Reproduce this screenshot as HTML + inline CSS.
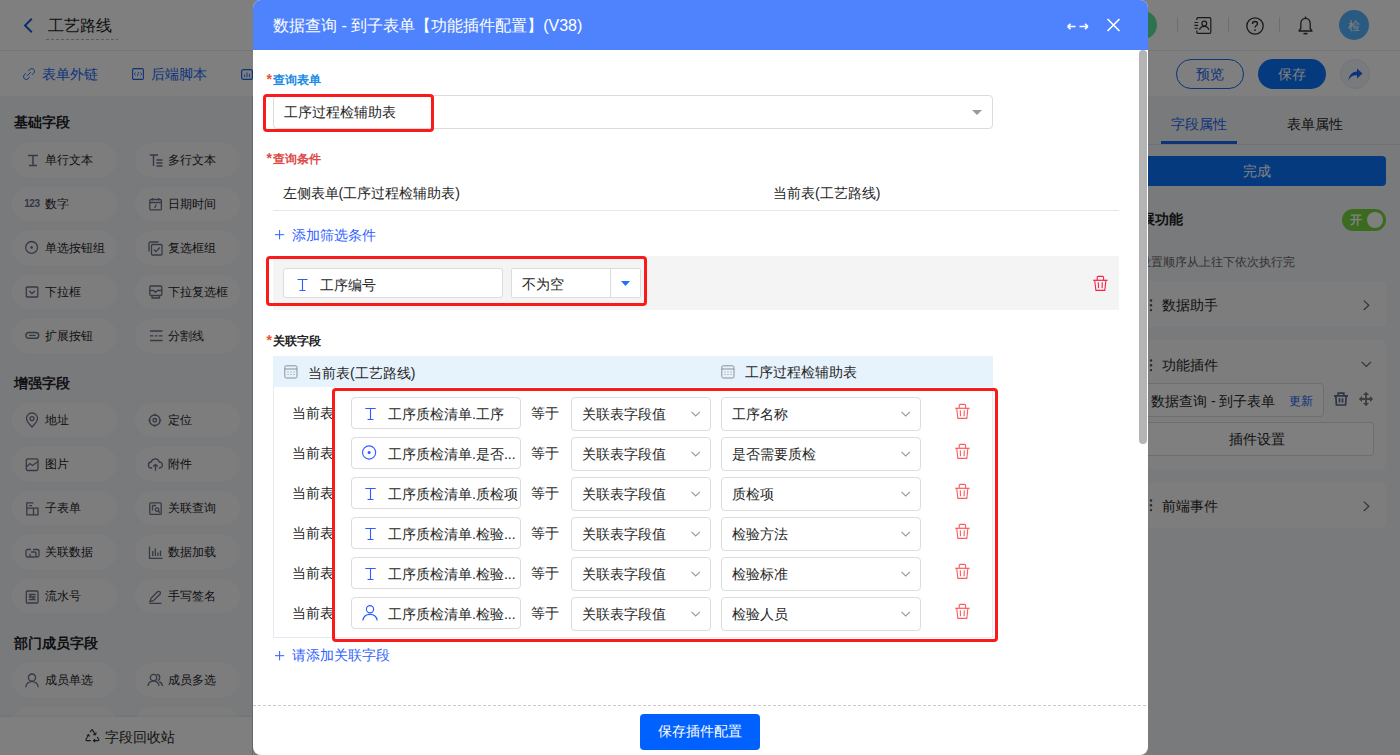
<!DOCTYPE html>
<html><head><meta charset="utf-8">
<style>
*{box-sizing:border-box;margin:0;padding:0}
html,body{width:1400px;height:755px;overflow:hidden;background:#fff;font-family:"Liberation Sans",sans-serif;color:#262626}
.a{position:absolute}
.t{position:absolute;white-space:nowrap;line-height:20px}
svg{position:absolute;overflow:visible;z-index:1}
/* page */
#topbar{left:0;top:0;width:1400px;height:51px;background:#fff;border-bottom:1px solid #ececec}
#toolbar{left:0;top:51px;width:1400px;height:45px;background:#fff}
#leftp{left:0;top:96px;width:253px;height:659px;background:#f3f4f7;border-right:1px solid #d2d5dc}
.sec{font-size:14px;font-weight:bold;color:#1f2329}
.pill{position:absolute;width:105px;height:34px;border-radius:17px;background:#fafbfc}
.pill span{position:absolute;left:33px;top:7px;font-size:12px;line-height:20px;color:#1f2329;white-space:nowrap}
.pill svg{left:14px;top:10px}
#recycle{left:0;top:717px;width:252px;height:38px;background:#fff;box-shadow:0 -1px 3px rgba(0,0,0,.06)}
#rightp{left:1148px;top:96px;width:252px;height:659px;background:#f3f4f7}
.card{position:absolute;left:-20px;width:258px;background:#fbfbfc;border-radius:6px}
#overlay{z-index:5;left:0;top:0;width:1400px;height:755px;background:rgba(0,0,0,.5)}
/* modal */
#modal{z-index:6;left:253px;top:0;width:895px;height:755px;background:#fff;border-radius:8px;overflow:hidden}
#mhead{left:0;top:0;width:895px;height:50px;background:#4f83fd}
.lbl{font-size:12px;font-weight:bold;line-height:16px}
.ast{position:absolute;font-size:14px;line-height:16px;font-weight:bold}
.inp{position:absolute;background:#fff;border:1px solid #dcdcdc;border-radius:4px}
.redbox{position:absolute;border:3px solid #fb1a1a;border-radius:4px}
.f14{font-size:14px}
</style></head><body>
<!-- ================= PAGE ================= -->
<div id="topbar" class="a">
  <svg style="left:23px;top:18px" width="10" height="15" viewBox="0 0 10 15"><path d="M8.8 0.8L2 7.5L8.8 14.2" stroke="#1556d6" stroke-width="1.9" fill="none"/></svg>
  <div class="t" style="left:48px;top:16px;font-size:16px;color:#1f2329">工艺路线</div>
  <div class="a" style="left:46px;top:39px;width:72px;height:1px;background-image:linear-gradient(90deg,#bbb 0 3px,transparent 3px 5px);background-size:5px 1px"></div>
  <div class="a" style="left:1129px;top:11px;width:28px;height:28px;border-radius:50%;background:#5ae6a0"></div>
  <div class="a" style="left:1177px;top:17px;width:1px;height:15px;background:#ddd"></div>
  <div class="a" style="left:1228px;top:17px;width:1px;height:15px;background:#ddd"></div>
  <div class="a" style="left:1279px;top:17px;width:1px;height:15px;background:#ddd"></div>
  <svg style="left:1194px;top:17px" width="18" height="17" viewBox="0 0 18 17"><path d="M2.8 3V1.8C2.8 1.1 3.3 0.6 4 0.6H15.6C16.3 0.6 16.8 1.1 16.8 1.8V15.2C16.8 15.9 16.3 16.4 15.6 16.4H4C3.3 16.4 2.8 15.9 2.8 15.2V13.5" stroke="#333" stroke-width="1.2" fill="none"/><circle cx="10.3" cy="6.6" r="2.4" stroke="#333" stroke-width="1.2" fill="none"/><path d="M5.6 12.8C6 10.5 7.9 9.4 10.3 9.4S14.3 10.5 14.8 12.8" stroke="#333" stroke-width="1.2" fill="none"/><path d="M0.4 5.5H4.2M0.4 8.4H4.2M0.4 11.3H4.2" stroke="#333" stroke-width="1.1"/></svg>
  <svg style="left:1246px;top:17px" width="18" height="18" viewBox="0 0 18 18"><circle cx="9" cy="9" r="8.2" stroke="#333" stroke-width="1.3" fill="none"/><path d="M6.5 7C6.5 5.4 7.6 4.5 9 4.5S11.5 5.4 11.5 6.9C11.5 8.4 9 8.7 9 10.6" stroke="#333" stroke-width="1.4" fill="none"/><circle cx="9" cy="13.2" r="0.9" fill="#333"/></svg>
  <svg style="left:1298px;top:16px" width="15" height="19" viewBox="0 0 15 19"><path d="M7.5 2.3C4.5 2.3 2.8 4.6 2.8 7.5V12.5L1 15H14L12.2 12.5V7.5C12.2 4.6 10.5 2.3 7.5 2.3Z" stroke="#333" stroke-width="1.3" fill="none" stroke-linejoin="round"/><path d="M7.5 0.5V2.3" stroke="#333" stroke-width="1.3"/><path d="M5.5 17.6H9.5" stroke="#333" stroke-width="1.6"/></svg>
  <div class="a" style="left:1339px;top:10px;width:30px;height:30px;border-radius:50%;background:#54b4ff"></div>
  <div class="t" style="left:1339px;top:16px;width:30px;text-align:center;font-size:12px;color:#fff">检</div>
</div>
<div id="toolbar" class="a">
  <svg style="left:23px;top:17px" width="12" height="12" viewBox="0 0 12 12"><path d="M5.2 3L6.8 1.4C7.9 0.3 9.7 0.3 10.7 1.4S11.7 4 10.7 5.1L8.9 6.9M6.8 9L5.2 10.6C4.1 11.7 2.3 11.7 1.3 10.6S0.3 8 1.3 6.9L3.1 5.1M4.2 7.8L7.8 4.2" stroke="#1a66f5" stroke-width="1" fill="none"/></svg>
  <div class="t" style="left:42px;top:13px;font-size:14px;color:#1a66f5">表单外链</div>
  <svg style="left:132px;top:17px" width="12" height="12" viewBox="0 0 12 12"><rect x="0.6" y="0.6" width="10.8" height="10.8" rx="1.2" stroke="#1a66f5" stroke-width="1.1" fill="none"/><path d="M3.6 4.4L2.2 6L3.6 7.6M8.4 4.4L9.8 6L8.4 7.6M6.6 4L5.4 8" stroke="#1a66f5" stroke-width="0.8" fill="none"/></svg>
  <div class="t" style="left:151px;top:13px;font-size:14px;color:#1a66f5">后端脚本</div>
  <svg style="left:241px;top:18px" width="12" height="11" viewBox="0 0 12 11"><rect x="0.6" y="0.6" width="10.8" height="9.8" rx="2" stroke="#1a66f5" stroke-width="1.2" fill="none"/><path d="M3.6 5.5V8.2M6 3.5V8.2M8.4 4.8V8.2" stroke="#1a66f5" stroke-width="0.9" fill="none"/></svg>
  <div class="a" style="left:1176px;top:8px;width:68px;height:30px;border-radius:15px;border:1.3px solid #1a66f5;background:#fff"></div>
  <div class="t" style="left:1176px;top:13px;width:68px;text-align:center;font-size:14px;color:#1a66f5">预览</div>
  <div class="a" style="left:1258px;top:8px;width:68px;height:30px;border-radius:15px;background:#0a74ff"></div>
  <div class="t" style="left:1258px;top:13px;width:68px;text-align:center;font-size:14px;color:#fff">保存</div>
  <div class="a" style="left:1340px;top:8px;width:30px;height:30px;border-radius:50%;background:#f2f5fc;border:1px solid #e3e8f5"></div>
  <svg style="left:1348px;top:17px" width="15" height="13" viewBox="0 0 15 13"><path d="M9 0.5L14.5 5.5L9 10.5V7.3C5 7.3 2.5 8.5 0.5 12.5C1 7.5 3.5 3.8 9 3.5Z" fill="#1a66f5"/></svg>
</div>
<div id="leftp" class="a"><div class="t sec" style="left:14px;top:16px">基础字段</div>
<div class="pill" style="left:12px;top:47px"><span>单行文本</span><svg style="left:13px;top:10px" width="15" height="15" viewBox="0 0 15 15" fill="none" stroke="#6c7389" stroke-width="1.3"><path d="M3 2.6H13M4 12.6H12M8 2.6V12.6" stroke-width="1.5"/></svg></div>
<div class="pill" style="left:135px;top:47px"><span>多行文本</span><svg style="left:13px;top:10px" width="15" height="15" viewBox="0 0 15 15" fill="none" stroke="#6c7389" stroke-width="1.3"><path d="M1.8 2H10M5.5 2V13M8.5 7H14.5M8.5 10H14.5M8.5 13H14.5" stroke-width="1.4"/></svg></div>
<div class="pill" style="left:12px;top:91px"><span>数字</span><b style="position:absolute;left:12.3px;top:11px;font-family:'Liberation Sans';font-size:10px;line-height:12px;color:#687089;letter-spacing:-0.5px">123</b></div>
<div class="pill" style="left:135px;top:91px"><span>日期时间</span><svg style="left:13px;top:10px" width="15" height="15" viewBox="0 0 15 15" fill="none" stroke="#6c7389" stroke-width="1.3"><rect x="1.8" y="2.5" width="11.6" height="10.4" rx="1.2"/><path d="M1.8 5.5H13.4M4.5 1V3.5M10.7 1V3.5M8.3 7.5L6.7 11"/></svg></div>
<div class="pill" style="left:12px;top:135px"><span>单选按钮组</span><svg style="left:13px;top:10px" width="15" height="15" viewBox="0 0 15 15" fill="none" stroke="#6c7389" stroke-width="1.3"><circle cx="6.6" cy="6.4" r="5.9"/><circle cx="6.6" cy="6.4" r="1.3" fill="#6c7389" stroke="none"/></svg></div>
<div class="pill" style="left:135px;top:135px"><span>复选框组</span><svg style="left:13px;top:10px" width="15" height="15" viewBox="0 0 15 15" fill="none" stroke="#6c7389" stroke-width="1.3"><path d="M1 10.5V2.5C1 1.6 1.6 1 2.5 1H10.5"/><rect x="3.5" y="3.5" width="10.5" height="10.5" rx="1"/><path d="M5.8 8.5L8 10.6L11.8 6.5"/></svg></div>
<div class="pill" style="left:12px;top:179px"><span>下拉框</span><svg style="left:13px;top:10px" width="15" height="15" viewBox="0 0 15 15" fill="none" stroke="#6c7389" stroke-width="1.3"><rect x="1.3" y="2" width="11.5" height="10" rx="0.8"/><path d="M4.3 6L7 8.6L9.8 6"/></svg></div>
<div class="pill" style="left:135px;top:179px"><span>下拉复选框</span><svg style="left:13px;top:10px" width="15" height="15" viewBox="0 0 15 15" fill="none" stroke="#6c7389" stroke-width="1.3"><rect x="1.8" y="1" width="12" height="9.5" rx="1.2"/><path d="M1.8 5.5H5.5L7.5 7.3L9.5 5.5H13.8"/><path d="M4 10.5V13H11.5V10.5"/></svg></div>
<div class="pill" style="left:12px;top:223px"><span>扩展按钮</span><svg style="left:13px;top:10px" width="15" height="15" viewBox="0 0 15 15" fill="none" stroke="#6c7389" stroke-width="1.3"><rect x="0.9" y="3.5" width="12.8" height="5.8" rx="2.9" stroke-width="1.4"/><path d="M4 6.4H10.6"/></svg></div>
<div class="pill" style="left:135px;top:223px"><span>分割线</span><svg style="left:13px;top:10px" width="15" height="15" viewBox="0 0 15 15" fill="none" stroke="#6c7389" stroke-width="1.3"><path d="M2 2H14.5M2 11.5H14.5M2 6.8H5.5M7 6.8H9.5M11 6.8H14.5"/></svg></div>
<div class="t sec" style="left:14px;top:277px">增强字段</div>
<div class="pill" style="left:12px;top:307px"><span>地址</span><svg style="left:13px;top:10px" width="15" height="15" viewBox="0 0 15 15" fill="none" stroke="#6c7389" stroke-width="1.3"><path d="M7 14C3.5 10.5 1.5 7.8 1.5 5.5A5.5 5.5 0 0 1 12.5 5.5C12.5 7.8 10.5 10.5 7 14Z"/><circle cx="7" cy="5.6" r="2"/></svg></div>
<div class="pill" style="left:135px;top:307px"><span>定位</span><svg style="left:13px;top:10px" width="15" height="15" viewBox="0 0 15 15" fill="none" stroke="#6c7389" stroke-width="1.3"><circle cx="6.8" cy="7.3" r="5.3"/><circle cx="6.8" cy="7.3" r="1.8"/><path d="M6.8 0.8V3M6.8 11.6V13.8M0.4 7.3H2.5M11.1 7.3H13.2"/></svg></div>
<div class="pill" style="left:12px;top:351px"><span>图片</span><svg style="left:13px;top:10px" width="15" height="15" viewBox="0 0 15 15" fill="none" stroke="#6c7389" stroke-width="1.3"><rect x="1.3" y="1.8" width="11.7" height="11.7" rx="1.5"/><path d="M1.3 10L5 6.5L7.5 8.5L13 4.5"/></svg></div>
<div class="pill" style="left:135px;top:351px"><span>附件</span><svg style="left:13px;top:10px" width="15" height="15" viewBox="0 0 15 15" fill="none" stroke="#6c7389" stroke-width="1.3"><path d="M4.2 11H3.6A3 3 0 0 1 3.2 5A4.2 4.2 0 0 1 11.3 5A3 3 0 0 1 11.5 11H10.8M7.5 13.8V7.5M5.3 9.5L7.5 7.3L9.7 9.5"/></svg></div>
<div class="pill" style="left:12px;top:395px"><span>子表单</span><svg style="left:13px;top:10px" width="15" height="15" viewBox="0 0 15 15" fill="none" stroke="#6c7389" stroke-width="1.3"><path d="M8.5 1.9H1.8V13.8H8.5M1.8 7.2H8.5V13.8M8.5 7.2H13V13.8H8.5M4.3 4.6H7"/></svg></div>
<div class="pill" style="left:135px;top:395px"><span>关联查询</span><svg style="left:13px;top:10px" width="15" height="15" viewBox="0 0 15 15" fill="none" stroke="#6c7389" stroke-width="1.3"><rect x="1.8" y="1.8" width="11.4" height="11.6" rx="1"/><path d="M4.5 4.5H8M4.5 4.5V9.5"/><circle cx="9" cy="8.6" r="1.8"/><path d="M10.3 10L12 11.7"/></svg></div>
<div class="pill" style="left:12px;top:439px"><span>关联数据</span><svg style="left:13px;top:10px" width="15" height="15" viewBox="0 0 15 15" fill="none" stroke="#6c7389" stroke-width="1.3"><path d="M5.8 4.5H2.5C1.6 4.5 1 5.1 1 6V10.5C1 11.4 1.6 12 2.5 12H5M6 7H9.5C10.4 7 11 7.6 11 8.5V10.5C11 11.4 10.4 12 9.5 12H6.5C5.6 12 5 11.4 5 10.5V8.8M8 4.5H12.5C13.4 4.5 14 5.1 14 6V10.5C14 11.4 13.4 12 12.5 12H11"/></svg></div>
<div class="pill" style="left:135px;top:439px"><span>数据加载</span><svg style="left:13px;top:10px" width="15" height="15" viewBox="0 0 15 15" fill="none" stroke="#6c7389" stroke-width="1.3"><path d="M1.5 1.5V13.3H14.5M4.7 6V11M7.3 3.5V11M9.9 7.5V11M12.5 5.5V11"/></svg></div>
<div class="pill" style="left:12px;top:483px"><span>流水号</span><svg style="left:13px;top:10px" width="15" height="15" viewBox="0 0 15 15" fill="none" stroke="#6c7389" stroke-width="1.3"><rect x="1.3" y="2" width="11.7" height="12" rx="1"/><path d="M3.8 5.5H10.5M3.8 8H10.5M3.8 10.5H10.5M6 5.5L5 8M8.8 8L7.8 10.5"/></svg></div>
<div class="pill" style="left:135px;top:483px"><span>手写签名</span><svg style="left:13px;top:10px" width="15" height="15" viewBox="0 0 15 15" fill="none" stroke="#6c7389" stroke-width="1.3"><path d="M2 12.5L3 9.3L9.5 2.8C10.2 2.1 11.2 2.1 11.9 2.8C12.6 3.5 12.6 4.5 11.9 5.2L5.4 11.7L2 12.5ZM1.5 14.3H13.5"/></svg></div>
<div class="t sec" style="left:14px;top:537px">部门成员字段</div>
<div class="pill" style="left:12px;top:567px"><span>成员单选</span><svg style="left:13px;top:10px" width="15" height="15" viewBox="0 0 15 15" fill="none" stroke="#6c7389" stroke-width="1.3"><circle cx="7" cy="4.6" r="3.6"/><path d="M0.8 14.2C1.2 10.7 3.8 8.6 7 8.6S12.8 10.7 13.2 14.2"/></svg></div>
<div class="pill" style="left:135px;top:567px"><span>成员多选</span><svg style="left:13px;top:10px" width="15" height="15" viewBox="0 0 15 15" fill="none" stroke="#6c7389" stroke-width="1.3"><circle cx="5.5" cy="4.6" r="3.2"/><path d="M0 13C0.4 9.9 2.6 8.1 5.5 8.1S10.6 9.9 11 13M8.8 1.4C10.5 1.4 11.8 2.8 11.8 4.6C11.8 6 11 7.2 9.8 7.7M11.2 8.6C13 9.3 14.2 11 14.5 13"/></svg></div>
<div class="pill" style="left:12px;top:611px"><span></span></div>
<div class="pill" style="left:135px;top:611px"><span></span></div>
<div id="recycle" class="a" style="top:621px">
  <svg style="left:85px;top:11.5px" width="15" height="14" viewBox="0 0 15 14" fill="none" stroke="#333" stroke-width="1.1"><path d="M5 3.2L6.6 0.9Q7 0.4 7.4 0.9L10.3 5.6"/><path d="M8.3 5.6H10.5L11.2 3.4"/><path d="M12.3 8L13.8 10.6Q14 11.5 13 11.6H8.6"/><path d="M10.1 10.1L8.5 11.6L10.1 13.1"/><path d="M5.8 11.6H1.6Q0.6 11.5 0.9 10.6L3.6 5.8"/><path d="M1.8 6.4L3.7 5.6L4.5 7.5"/></svg>
  <div class="t" style="left:105px;top:9.5px;font-size:14px;color:#262626">字段回收站</div>
</div></div>
<div id="rightp" class="a">
  <div class="a" style="left:0;top:48px;width:252px;height:1px;background:#e2e4ea"></div>
  <div class="t" style="left:23px;top:18px;font-size:14px;color:#1a66f5">字段属性</div>
  <div class="a" style="left:13px;top:45px;width:76px;height:3px;background:#1a66f5"></div>
  <div class="t" style="left:139px;top:18px;font-size:14px;color:#262626">表单属性</div>
  <div class="a" style="left:-20px;top:60px;width:258px;height:30px;border-radius:4px;background:#0a74ff"></div>
  <div class="t" style="left:-20px;top:65px;width:258px;text-align:center;font-size:14px;color:#fff">完成</div>
  <div class="t" style="left:-21px;top:113px;font-size:14px;font-weight:bold;color:#1f2329">扩展功能</div>
  <div class="a" style="left:194px;top:113px;width:44px;height:22px;border-radius:11px;background:#76d63e"></div>
  <div class="t" style="left:202px;top:114px;font-size:12px;font-weight:bold;color:#fff">开</div>
  <div class="a" style="left:219px;top:116px;width:16px;height:16px;border-radius:50%;background:#fff"></div>
  <div class="t" style="left:-21px;top:156px;font-size:12px;color:#666">按设置顺序从上往下依次执行完</div>
  <div class="card" style="top:185px;height:46px"></div>
  <div class="card" style="top:244px;height:130px"></div>
  <div class="card" style="top:386px;height:46px"></div>

  <svg style="left:0.8px;top:203px" width="4" height="13" viewBox="0 0 4 13" fill="#555"><circle cx="2" cy="1.5" r="1.2"/><circle cx="2" cy="6.3" r="1.2"/><circle cx="2" cy="11.1" r="1.2"/></svg>
  <div class="t" style="left:14px;top:199px;font-size:14px;color:#262626">数据助手</div>
  <svg style="left:215px;top:204px" width="7" height="11" viewBox="0 0 7 11" fill="none" stroke="#666" stroke-width="1.2"><path d="M0.8 0.6L5.8 5.3L0.8 10"/></svg>
  <svg style="left:0.8px;top:263px" width="4" height="13" viewBox="0 0 4 13" fill="#555"><circle cx="2" cy="1.5" r="1.2"/><circle cx="2" cy="6.3" r="1.2"/><circle cx="2" cy="11.1" r="1.2"/></svg>
  <div class="t" style="left:14px;top:258.5px;font-size:14px;color:#262626">功能插件</div>
  <svg style="left:213px;top:265px" width="11" height="7" viewBox="0 0 11 7" fill="none" stroke="#666" stroke-width="1.2"><path d="M0.6 0.8L5.3 5.5L10 0.8"/></svg>
  <div class="a" style="left:-20px;top:287px;width:196px;height:34px;border:1px solid #dcdcdc;border-radius:4px;background:#fff"></div>
  <div class="t" style="left:3px;top:294.5px;font-size:14px;color:#262626">数据查询 - 到子表单</div>
  <div class="t" style="left:141px;top:294.5px;font-size:12px;color:#1a66f5">更新</div>
  <svg style="left:186px;top:296px" width="14" height="14" viewBox="0 0 14 14" fill="none" stroke="#5d6b8c" stroke-width="1.7"><path d="M4.2 3.3V1.2H9.8V3.3M0 3.9H14M1.8 3.9L2.4 13H11.6L12.2 3.9M5.5 6.3V10.5M8.5 6.3V10.5"/></svg>
  <svg style="left:211px;top:296px" width="14" height="14" viewBox="0 0 14 14" fill="#7a7c82" stroke="#7a7c82" stroke-width="1.8"><path d="M7 2V12M2 7H12" fill="none"/><path d="M7 -0.2L10 3H4Z M7 14.2L10 11H4Z M-0.2 7L3 4V10Z M14.2 7L11 4V10Z" stroke="none"/></svg>
  <div class="a" style="left:-20px;top:326px;width:246px;height:34px;border:1px solid #dcdcdc;border-radius:3px;background:#fff"></div>
  <div class="t" style="left:81px;top:333px;font-size:14px;color:#262626">插件设置</div>
  <svg style="left:0.8px;top:403px" width="4" height="13" viewBox="0 0 4 13" fill="#555"><circle cx="2" cy="1.5" r="1.2"/><circle cx="2" cy="6.3" r="1.2"/><circle cx="2" cy="11.1" r="1.2"/></svg>
  <div class="t" style="left:14px;top:400px;font-size:14px;color:#262626">前端事件</div>
  <svg style="left:215px;top:405px" width="7" height="11" viewBox="0 0 7 11" fill="none" stroke="#666" stroke-width="1.2"><path d="M0.8 0.6L5.8 5.3L0.8 10"/></svg>
</div>

<!-- ================= OVERLAY ================= -->
<div id="overlay" class="a"></div>

<!-- ================= MODAL ================= -->

<div id="modal" class="a">
  <div id="mhead" class="a">
    <div class="t" style="left:20px;top:16px;font-size:16px;color:#fff">数据查询 - 到子表单【功能插件配置】(V38)</div>
    <svg style="left:814px;top:23px" width="22" height="8" viewBox="0 0 22 8"><path d="M0.5 3.5H8.5M0.5 3.5L3.5 0.8M0.5 3.5L3.5 6.2M12.5 3.5H21M21 3.5L18 0.8M21 3.5L18 6.2" stroke="#fff" stroke-width="1.6" fill="none"/></svg>
    <svg style="left:854px;top:19px" width="13" height="12" viewBox="0 0 13 12"><path d="M0.5 0L12.5 12M12.5 0L0.5 12" stroke="#fff" stroke-width="1.6" fill="none"/></svg>
  </div>
  <!-- scrollbar -->
  <div class="a" style="left:886px;top:50px;width:8px;height:394px;background:#b4b4b4;border-radius:4px"></div>

  <!-- 查询表单 -->
  <div class="t ast" style="left:13.5px;top:71px;color:#f0502a">*</div><div class="t lbl" style="left:19.8px;top:72px;color:#1a8ae6">查询表单</div>
  <div class="inp" style="left:20px;top:95px;width:720px;height:34px"></div>
  <div class="t f14" style="left:30.5px;top:102px;color:#262626">工序过程检辅助表</div>
  <svg style="left:719px;top:110px" width="10" height="5" viewBox="0 0 10 5"><path d="M0 0H10L5 5Z" fill="#999"/></svg>
  <div class="redbox" style="left:10px;top:94px;width:171px;height:38px"></div>

  <!-- 查询条件 -->
  <div class="t ast" style="left:13.5px;top:150px;color:#e04848">*</div><div class="t lbl" style="left:19.8px;top:151px;color:#e04848">查询条件</div>
  <div class="t f14" style="left:29.5px;top:183px;color:#262626">左侧表单(工序过程检辅助表)</div>
  <div class="t f14" style="left:520px;top:183px;color:#262626">当前表(工艺路线)</div>
  <div class="a" style="left:20px;top:210px;width:846px;height:1px;background:#e8e8e8"></div>
  <svg style="left:22px;top:230.4px" width="10" height="10" viewBox="0 0 10 10" fill="none" stroke="#2f62ff" stroke-width="1"><path d="M4.6 0V9.4M0 4.7H9.2"/></svg>
  <div class="t f14" style="left:39px;top:225px;color:#2f62ff">添加筛选条件</div>

  <div class="a" style="left:20px;top:256px;width:846px;height:54px;background:#f4f4f5"></div>
  <div class="inp" style="left:30px;top:268px;width:220px;height:30px;border-radius:3px"></div>
  <svg style="left:44px;top:279px" width="12" height="13" viewBox="0 0 12 13" fill="none" stroke="#2d5bff" stroke-width="1.1"><path d="M0.5 0.5H10.5M5.5 0.5V11.5M2.5 11.5H8.5"/></svg>
  <div class="t f14" style="left:67px;top:275px;color:#262626">工序编号</div>
  <svg style="left:840.2px;top:276.3px" width="15" height="15" viewBox="0 0 15 15" fill="none" stroke="#f5224a" stroke-width="1.1"><path d="M4.2 4.2V1.4C4.2 0.8 4.6 0.4 5.2 0.4H9.6C10.2 0.4 10.6 0.8 10.6 1.4V4.2"/><path d="M0.2 4.3H14.6" stroke-width="1.2"/><path d="M1.7 4.3L2.9 14.4H11.8L12.9 4.3"/><path d="M5.3 6.3L5.5 12.3M9.3 6.3L9.1 12.3"/></svg>
  <div class="inp" style="left:258px;top:268px;width:130px;height:30px;border-radius:2px"></div>
  <div class="a" style="left:357px;top:269px;width:1px;height:28px;background:#dcdcdc"></div>
  <div class="t f14" style="left:268.5px;top:273.5px;color:#262626">不为空</div>
  <svg style="left:367.5px;top:281px" width="9" height="5" viewBox="0 0 9 5"><path d="M0 0H9L4.5 5Z" fill="#1f6fff"/></svg>
  <div class="redbox" style="left:13px;top:256px;width:381px;height:50px"></div>

  <!-- 关联字段 -->
  <div class="t ast" style="left:13.5px;top:332px;color:#f0502a">*</div><div class="t lbl" style="left:19.8px;top:333px;color:#222">关联字段</div>
  <div class="a" style="left:20px;top:356px;width:720px;height:282px;border:1px solid #e6e9f2;border-top:none"></div>
  <div class="a" style="left:20px;top:356px;width:720px;height:31px;background:#e6f3fd"></div>
  <svg style="left:30.8px;top:365px" width="14" height="14" viewBox="0 0 14 14" fill="none" stroke="#8a8f99" stroke-width="1"><rect x="0.8" y="0.8" width="12.2" height="12.2" rx="1.5"/><path d="M0.8 4H13"/><path d="M3.5 7H4.5M6.5 7H7.5M9.5 7H10.5M3.5 9.5H4.5M6.5 9.5H7.5M9.5 9.5H10.5" stroke-width="1.1"/></svg>
  <div class="t f14" style="left:55px;top:362.5px;color:#262626">当前表(工艺路线)</div>
  <svg style="left:468.2px;top:365px" width="14" height="14" viewBox="0 0 14 14" fill="none" stroke="#8a8f99" stroke-width="1"><rect x="0.8" y="0.8" width="12.2" height="12.2" rx="1.5"/><path d="M0.8 4H13"/><path d="M3.5 7H4.5M6.5 7H7.5M9.5 7H10.5M3.5 9.5H4.5M6.5 9.5H7.5M9.5 9.5H10.5" stroke-width="1.1"/></svg>
  <div class="t f14" style="left:491.5px;top:362px;color:#262626">工序过程检辅助表</div>
  
  <div class="t f14" style="left:39.2px;top:402.5px;color:#262626;width:41px;overflow:hidden">当前表</div>
  <div class="inp" style="left:98px;top:397px;width:170px;height:32px"></div>
  <svg style="left:112px;top:408px" width="12" height="12" viewBox="0 0 12 12" fill="none" stroke="#2d5bff" stroke-width="1.1"><path d="M0.3 0.5H10.7M5.5 0.5V11.5M2.5 11.5H8.5"/></svg>
<svg style="left:437.5px;top:411px" width="10" height="7" viewBox="0 0 10 7" fill="none" stroke="#999" stroke-width="1.1"><path d="M0.5 0.8L4.7 5L8.9 0.8"/></svg>
<svg style="left:647.5px;top:411px" width="10" height="7" viewBox="0 0 10 7" fill="none" stroke="#999" stroke-width="1.1"><path d="M0.5 0.8L4.7 5L8.9 0.8"/></svg>
<svg style="left:702.2px;top:404px" width="15" height="15" viewBox="0 0 15 15" fill="none" stroke="#fa5c5c" stroke-width="1.1"><path d="M4.2 4.2V1.4C4.2 0.8 4.6 0.4 5.2 0.4H9.6C10.2 0.4 10.6 0.8 10.6 1.4V4.2"/><path d="M0.2 4.3H14.6" stroke-width="1.2"/><path d="M1.7 4.3L2.9 14.4H11.8L12.9 4.3"/><path d="M5.3 6.3L5.5 12.3M9.3 6.3L9.1 12.3"/></svg>
  <div class="t f14" style="left:135px;top:404px;color:#262626">工序质检清单.工序</div>
  <div class="t f14" style="left:278px;top:403px;color:#262626">等于</div>
  <div class="inp" style="left:318px;top:397px;width:140px;height:34px"></div>
  <div class="t f14" style="left:328.5px;top:404px;color:#262626">关联表字段值</div>
  <div class="inp" style="left:468px;top:397px;width:200px;height:34px"></div>
  <div class="t f14" style="left:478.5px;top:404px;color:#262626">工序名称</div>

  <div class="t f14" style="left:39.2px;top:442.5px;color:#262626;width:41px;overflow:hidden">当前表</div>
  <div class="inp" style="left:98px;top:437px;width:170px;height:32px"></div>
  <svg style="left:109px;top:445px" width="15" height="15" viewBox="0 0 15 15" fill="none" stroke="#2d5bff" stroke-width="1.1"><circle cx="7.1" cy="7.5" r="6.6"/><circle cx="7.1" cy="7.5" r="1.5" fill="#2d5bff" stroke="none"/></svg>
<svg style="left:437.5px;top:451px" width="10" height="7" viewBox="0 0 10 7" fill="none" stroke="#999" stroke-width="1.1"><path d="M0.5 0.8L4.7 5L8.9 0.8"/></svg>
<svg style="left:647.5px;top:451px" width="10" height="7" viewBox="0 0 10 7" fill="none" stroke="#999" stroke-width="1.1"><path d="M0.5 0.8L4.7 5L8.9 0.8"/></svg>
<svg style="left:702.2px;top:444px" width="15" height="15" viewBox="0 0 15 15" fill="none" stroke="#fa5c5c" stroke-width="1.1"><path d="M4.2 4.2V1.4C4.2 0.8 4.6 0.4 5.2 0.4H9.6C10.2 0.4 10.6 0.8 10.6 1.4V4.2"/><path d="M0.2 4.3H14.6" stroke-width="1.2"/><path d="M1.7 4.3L2.9 14.4H11.8L12.9 4.3"/><path d="M5.3 6.3L5.5 12.3M9.3 6.3L9.1 12.3"/></svg>
  <div class="t f14" style="left:135px;top:444px;color:#262626">工序质检清单.是否...</div>
  <div class="t f14" style="left:278px;top:443px;color:#262626">等于</div>
  <div class="inp" style="left:318px;top:437px;width:140px;height:34px"></div>
  <div class="t f14" style="left:328.5px;top:444px;color:#262626">关联表字段值</div>
  <div class="inp" style="left:468px;top:437px;width:200px;height:34px"></div>
  <div class="t f14" style="left:478.5px;top:444px;color:#262626">是否需要质检</div>

  <div class="t f14" style="left:39.2px;top:482.5px;color:#262626;width:41px;overflow:hidden">当前表</div>
  <div class="inp" style="left:98px;top:477px;width:170px;height:32px"></div>
  <svg style="left:112px;top:488px" width="12" height="12" viewBox="0 0 12 12" fill="none" stroke="#2d5bff" stroke-width="1.1"><path d="M0.3 0.5H10.7M5.5 0.5V11.5M2.5 11.5H8.5"/></svg>
<svg style="left:437.5px;top:491px" width="10" height="7" viewBox="0 0 10 7" fill="none" stroke="#999" stroke-width="1.1"><path d="M0.5 0.8L4.7 5L8.9 0.8"/></svg>
<svg style="left:647.5px;top:491px" width="10" height="7" viewBox="0 0 10 7" fill="none" stroke="#999" stroke-width="1.1"><path d="M0.5 0.8L4.7 5L8.9 0.8"/></svg>
<svg style="left:702.2px;top:484px" width="15" height="15" viewBox="0 0 15 15" fill="none" stroke="#fa5c5c" stroke-width="1.1"><path d="M4.2 4.2V1.4C4.2 0.8 4.6 0.4 5.2 0.4H9.6C10.2 0.4 10.6 0.8 10.6 1.4V4.2"/><path d="M0.2 4.3H14.6" stroke-width="1.2"/><path d="M1.7 4.3L2.9 14.4H11.8L12.9 4.3"/><path d="M5.3 6.3L5.5 12.3M9.3 6.3L9.1 12.3"/></svg>
  <div class="t f14" style="left:135px;top:484px;color:#262626">工序质检清单.质检项</div>
  <div class="t f14" style="left:278px;top:483px;color:#262626">等于</div>
  <div class="inp" style="left:318px;top:477px;width:140px;height:34px"></div>
  <div class="t f14" style="left:328.5px;top:484px;color:#262626">关联表字段值</div>
  <div class="inp" style="left:468px;top:477px;width:200px;height:34px"></div>
  <div class="t f14" style="left:478.5px;top:484px;color:#262626">质检项</div>

  <div class="t f14" style="left:39.2px;top:522.5px;color:#262626;width:41px;overflow:hidden">当前表</div>
  <div class="inp" style="left:98px;top:517px;width:170px;height:32px"></div>
  <svg style="left:112px;top:528px" width="12" height="12" viewBox="0 0 12 12" fill="none" stroke="#2d5bff" stroke-width="1.1"><path d="M0.3 0.5H10.7M5.5 0.5V11.5M2.5 11.5H8.5"/></svg>
<svg style="left:437.5px;top:531px" width="10" height="7" viewBox="0 0 10 7" fill="none" stroke="#999" stroke-width="1.1"><path d="M0.5 0.8L4.7 5L8.9 0.8"/></svg>
<svg style="left:647.5px;top:531px" width="10" height="7" viewBox="0 0 10 7" fill="none" stroke="#999" stroke-width="1.1"><path d="M0.5 0.8L4.7 5L8.9 0.8"/></svg>
<svg style="left:702.2px;top:524px" width="15" height="15" viewBox="0 0 15 15" fill="none" stroke="#fa5c5c" stroke-width="1.1"><path d="M4.2 4.2V1.4C4.2 0.8 4.6 0.4 5.2 0.4H9.6C10.2 0.4 10.6 0.8 10.6 1.4V4.2"/><path d="M0.2 4.3H14.6" stroke-width="1.2"/><path d="M1.7 4.3L2.9 14.4H11.8L12.9 4.3"/><path d="M5.3 6.3L5.5 12.3M9.3 6.3L9.1 12.3"/></svg>
  <div class="t f14" style="left:135px;top:524px;color:#262626">工序质检清单.检验...</div>
  <div class="t f14" style="left:278px;top:523px;color:#262626">等于</div>
  <div class="inp" style="left:318px;top:517px;width:140px;height:34px"></div>
  <div class="t f14" style="left:328.5px;top:524px;color:#262626">关联表字段值</div>
  <div class="inp" style="left:468px;top:517px;width:200px;height:34px"></div>
  <div class="t f14" style="left:478.5px;top:524px;color:#262626">检验方法</div>

  <div class="t f14" style="left:39.2px;top:562.5px;color:#262626;width:41px;overflow:hidden">当前表</div>
  <div class="inp" style="left:98px;top:557px;width:170px;height:32px"></div>
  <svg style="left:112px;top:568px" width="12" height="12" viewBox="0 0 12 12" fill="none" stroke="#2d5bff" stroke-width="1.1"><path d="M0.3 0.5H10.7M5.5 0.5V11.5M2.5 11.5H8.5"/></svg>
<svg style="left:437.5px;top:571px" width="10" height="7" viewBox="0 0 10 7" fill="none" stroke="#999" stroke-width="1.1"><path d="M0.5 0.8L4.7 5L8.9 0.8"/></svg>
<svg style="left:647.5px;top:571px" width="10" height="7" viewBox="0 0 10 7" fill="none" stroke="#999" stroke-width="1.1"><path d="M0.5 0.8L4.7 5L8.9 0.8"/></svg>
<svg style="left:702.2px;top:564px" width="15" height="15" viewBox="0 0 15 15" fill="none" stroke="#fa5c5c" stroke-width="1.1"><path d="M4.2 4.2V1.4C4.2 0.8 4.6 0.4 5.2 0.4H9.6C10.2 0.4 10.6 0.8 10.6 1.4V4.2"/><path d="M0.2 4.3H14.6" stroke-width="1.2"/><path d="M1.7 4.3L2.9 14.4H11.8L12.9 4.3"/><path d="M5.3 6.3L5.5 12.3M9.3 6.3L9.1 12.3"/></svg>
  <div class="t f14" style="left:135px;top:564px;color:#262626">工序质检清单.检验...</div>
  <div class="t f14" style="left:278px;top:563px;color:#262626">等于</div>
  <div class="inp" style="left:318px;top:557px;width:140px;height:34px"></div>
  <div class="t f14" style="left:328.5px;top:564px;color:#262626">关联表字段值</div>
  <div class="inp" style="left:468px;top:557px;width:200px;height:34px"></div>
  <div class="t f14" style="left:478.5px;top:564px;color:#262626">检验标准</div>

  <div class="t f14" style="left:39.2px;top:602.5px;color:#262626;width:41px;overflow:hidden">当前表</div>
  <div class="inp" style="left:98px;top:597px;width:170px;height:32px"></div>
  <svg style="left:108.5px;top:605px" width="16" height="16" viewBox="0 0 16 16" fill="none" stroke="#2d5bff" stroke-width="1.15"><circle cx="8" cy="4.2" r="3.6"/><path d="M0.9 15.5C1.3 11.5 4.2 9.3 8 9.3S14.7 11.5 15.1 15.5"/></svg>
<svg style="left:437.5px;top:611px" width="10" height="7" viewBox="0 0 10 7" fill="none" stroke="#999" stroke-width="1.1"><path d="M0.5 0.8L4.7 5L8.9 0.8"/></svg>
<svg style="left:647.5px;top:611px" width="10" height="7" viewBox="0 0 10 7" fill="none" stroke="#999" stroke-width="1.1"><path d="M0.5 0.8L4.7 5L8.9 0.8"/></svg>
<svg style="left:702.2px;top:604px" width="15" height="15" viewBox="0 0 15 15" fill="none" stroke="#fa5c5c" stroke-width="1.1"><path d="M4.2 4.2V1.4C4.2 0.8 4.6 0.4 5.2 0.4H9.6C10.2 0.4 10.6 0.8 10.6 1.4V4.2"/><path d="M0.2 4.3H14.6" stroke-width="1.2"/><path d="M1.7 4.3L2.9 14.4H11.8L12.9 4.3"/><path d="M5.3 6.3L5.5 12.3M9.3 6.3L9.1 12.3"/></svg>
  <div class="t f14" style="left:135px;top:604px;color:#262626">工序质检清单.检验...</div>
  <div class="t f14" style="left:278px;top:603px;color:#262626">等于</div>
  <div class="inp" style="left:318px;top:597px;width:140px;height:34px"></div>
  <div class="t f14" style="left:328.5px;top:604px;color:#262626">关联表字段值</div>
  <div class="inp" style="left:468px;top:597px;width:200px;height:34px"></div>
  <div class="t f14" style="left:478.5px;top:604px;color:#262626">检验人员</div>

  <div class="redbox" style="left:79px;top:388px;width:666px;height:254px"></div>
  <svg style="left:22px;top:650.6px" width="10" height="10" viewBox="0 0 10 10" fill="none" stroke="#2f62ff" stroke-width="1"><path d="M4.6 0V9.4M0 4.7H9.2"/></svg>
  <div class="t f14" style="left:39px;top:645px;color:#2f62ff">请添加关联字段</div>

  <!-- footer -->
  <div class="a" style="left:0;top:705px;width:895px;height:1px;background-image:linear-gradient(90deg,#c8c8c8 0 3px,transparent 3px 5px);background-size:5px 1px"></div>
  <div class="a" style="left:387px;top:714px;width:120px;height:36px;background:#0061fe;border-radius:4px"></div>
  <div class="t f14" style="left:387px;top:721px;width:120px;text-align:center;color:#fff">保存插件配置</div>
</div>

</body></html>
